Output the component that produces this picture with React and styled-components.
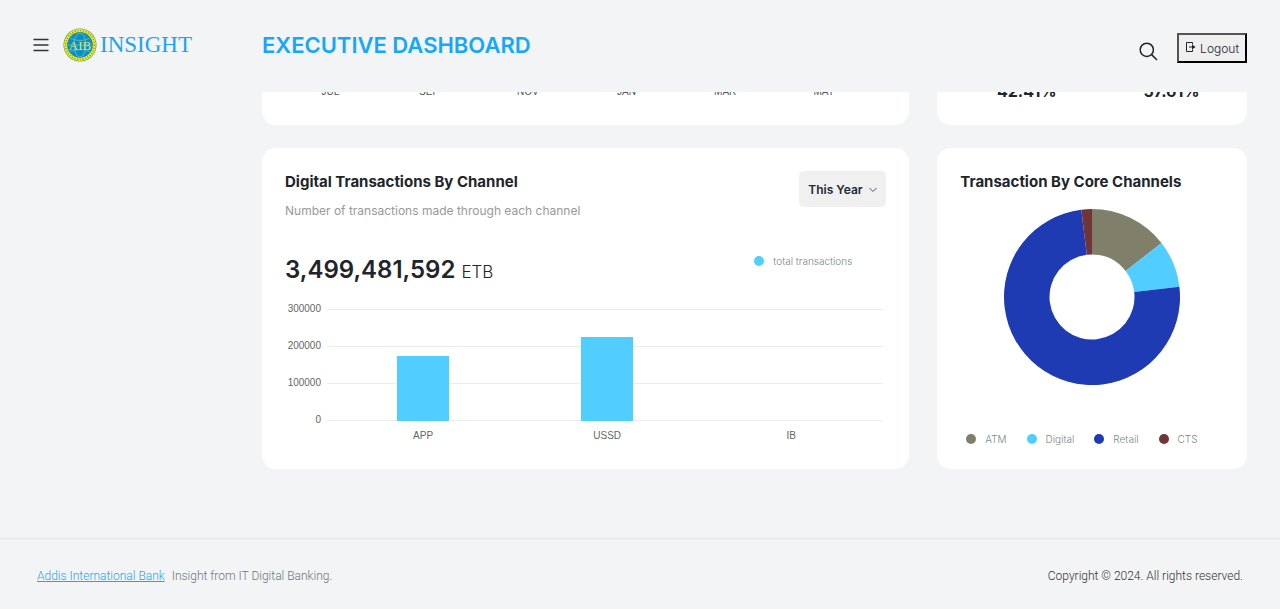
import React from "react";
import styled, { createGlobalStyle } from "styled-components";

const GlobalStyle = createGlobalStyle`
  *, *::before, *::after { box-sizing: border-box; }
  body {
    margin: 0;
    background: #f3f4f6;
    color: #212529;
    font-family: Inter, "Liberation Sans", sans-serif;
    font-size: 12px;
  }
  h1, h2, p { margin: 0; }
`;

const Page = styled.div`
  min-height: 100vh;
  display: flex;
  flex-direction: column;
`;

const Header = styled.header`
  height: 92px;
  flex: none;
  display: flex;
  align-items: center;
  padding: 0 33px 2px;
  background: #f3f4f6;
`;

const Brand = styled.div`
  width: 229px;
  flex: none;
  display: flex;
  align-items: center;
`;

const MenuButton = styled.button`
  display: flex;
  padding: 0;
  border: 0;
  background: none;
  margin-right: 14px;
`;

const BrandLink = styled.a`
  display: flex;
  align-items: center;
  gap: 3px;
  color: #1da1f2;
  text-decoration: none;
  font-family: "Liberation Serif", serif;
  font-size: 23px;
  line-height: 32px;
`;

const Title = styled.h1`
  flex: 1;
  color: #16a8f8;
  font-size: 22px;
  font-weight: 600;
  line-height: 32px;
`;

const Actions = styled.div`
  display: flex;
  align-items: center;
  gap: 19px;
  padding-top: 6px;
`;

const IconButton = styled.button`
  display: flex;
  padding: 6px 0 0;
  border: 0;
  background: none;
`;

const LogoutButton = styled.button`
  height: 30px;
  display: flex;
  align-items: center;
  gap: 4px;
  padding: 0 6px;
  border: 2px outset #000;
  background: #efefef;
  color: #212529;
  font: 300 12px Inter, sans-serif;
  svg { margin-bottom: 3px; }
`;

const Main = styled.main`
  flex: 1;
  padding: 0 33px 69px 262px;
  display: flex;
  flex-direction: column;
  gap: 23px;
`;

const Row = styled.div`
  display: grid;
  grid-template-columns: repeat(12, minmax(0, 1fr));
  column-gap: 28px;
`;

const Card = styled.section`
  grid-column: span ${(p) => p.$span};
  min-height: 321px;
  padding: 22px 23px;
  display: flex;
  flex-direction: column;
  background: #fff;
  border-radius: 14px;
`;

const ScrolledCard = styled.section`
  grid-column: span ${(p) => p.$span};
  height: 33px;
  display: flex;
  align-items: flex-end;
  overflow: hidden;
  padding: ${(p) => p.$pad};
  background: #fff;
  border-radius: 0 0 14px 14px;
`;

const Months = styled.div`
  flex: 1;
  display: flex;
  color: #555;
  font: 10px/12px "Liberation Sans", sans-serif;
`;

const Shares = styled.div`
  flex: 1;
  display: flex;
  font-size: 16px;
  font-weight: 700;
  line-height: 20px;
`;

const Cell = styled.span`
  flex: 1;
  text-align: center;
`;

const CardHead = styled.div`
  display: flex;
  justify-content: space-between;
  align-items: flex-start;
`;

const CardTitle = styled.h2`
  font-size: 15px;
  font-weight: 700;
  line-height: 24px;
`;

const Muted = styled.p`
  margin-top: 8px;
  color: #999;
  font-size: 12px;
  line-height: 18px;
`;

const SelectBox = styled.label`
  position: relative;
  display: flex;
  margin-top: 1px;
  svg { position: absolute; right: 9px; top: 15px; pointer-events: none; }
`;

const Select = styled.select`
  width: 87px;
  height: 36px;
  padding: 0 0 0 9px;
  appearance: none;
  border: 0;
  border-radius: 5px;
  background: #f0f0f0;
  color: #1f2937;
  font: 600 12px Inter, sans-serif;
`;

const Summary = styled.div`
  display: flex;
  align-items: flex-start;
  justify-content: space-between;
  margin-top: 34px;
  padding-right: 34px;
`;

const Amount = styled.p`
  display: flex;
  align-items: baseline;
  gap: 6px;
  font-size: 17px;
  font-weight: 300;
  line-height: 32px;
  strong { font-size: 24px; font-weight: 600; }
`;

const Legend = styled.ul`
  display: flex;
  gap: 20px;
  margin: 0;
  padding: ${(p) => p.$pad || 0};
  list-style: none;
  color: #7d8783;
  font-size: 10px;
  font-weight: 300;
  line-height: 14px;
`;

const LegendItem = styled.li`
  display: flex;
  align-items: center;
  gap: 9px;
  &::before {
    content: "";
    width: 10px;
    height: 10px;
    border-radius: 50%;
    background: ${(p) => p.$color};
  }
`;

const Chart = styled.div`
  display: grid;
  grid-template-columns: 36px 1fr;
  column-gap: 6px;
  margin: 15px 3px 0 0;
  color: #666;
  font: 10px/12px "Liberation Sans", sans-serif;
`;

const YAxis = styled.div`
  display: flex;
  flex-direction: column;
  justify-content: space-between;
  text-align: right;
`;

const PlotWrap = styled.div`
  padding: 6px 0 5px;
`;

const Plot = styled.div`
  display: flex;
  align-items: flex-end;
  height: 112px;
  padding-left: 4px;
  background: repeating-linear-gradient(#ececec 0 1px, transparent 1px 37px);
`;

const Slot = styled.div`
  flex: 1;
  height: 111px;
  display: flex;
  align-items: flex-end;
  justify-content: center;
`;

const Bar = styled.div`
  width: 28%;
  background: #52cdff;
`;

const XAxis = styled.div`
  grid-column: 2;
  display: flex;
  padding: 4px 0 0 4px;
`;

const DonutBox = styled.div`
  display: flex;
  justify-content: center;
  margin: 15px 0 47px;
`;

const Footer = styled.footer`
  height: 71px;
  display: flex;
  align-items: center;
  justify-content: space-between;
  padding: 3px 37px 0;
  border-top: 1px solid #e2e4e6;
  color: #6c757d;
  font-family: Roboto, sans-serif;
  font-weight: 300;
  line-height: 18px;
`;

const FooterLink = styled.a`
  margin-right: 7px;
  color: #1da5f5;
`;

const Copyright = styled.span`
  color: #333;
`;

const Emblem = () => (
  <svg width="34" height="34" viewBox="0 0 34 34" aria-hidden="true">
    <circle cx="17" cy="17" r="16.5" fill="#4f9a5a" />
    <circle cx="17" cy="17" r="14.4" fill="none" stroke="#f0ec30" strokeWidth="3" />
    <circle cx="17" cy="17" r="14.4" fill="none" stroke="#8b9a32" strokeWidth="1.4" strokeDasharray="1.2 1.5" />
    <circle cx="17" cy="17" r="12.4" fill="#0f8fc0" />
    <g fill="none" stroke="#6cc5dc" strokeWidth="0.7">
      <ellipse cx="17" cy="17" rx="6" ry="12" />
      <path d="M5 17h24M7.5 10.5q9.5 4 19 0M7.5 23.5q9.5-4 19 0" />
    </g>
    <text x="17" y="21.5" textAnchor="middle" fontFamily="Liberation Serif, serif" fontSize="13" fill="#d3e66a">AIB</text>
  </svg>
);

const channels = [
  { name: "APP", total: 177000 },
  { name: "USSD", total: 227000 },
  { name: "IB", total: 0 },
];

const core = [
  { name: "ATM", color: "#807f69", from: 0, to: 52.2 },
  { name: "Digital", color: "#52cdff", from: 52.2, to: 83.3 },
  { name: "Retail", color: "#1f3bb3", from: 83.3, to: 353 },
  { name: "CTS", color: "#703538", from: 353, to: 360 },
];

const point = (r, deg) => {
  const a = (deg * Math.PI) / 180;
  return `${88 + r * Math.sin(a)} ${88 - r * Math.cos(a)}`;
};

const slice = ({ from, to }) => {
  const large = to - from > 180 ? 1 : 0;
  return `M${point(88, from)}A88 88 0 ${large} 1 ${point(88, to)}L${point(42.5, to)}A42.5 42.5 0 ${large} 0 ${point(42.5, from)}Z`;
};

export default function App() {
  return (
    <Page>
      <GlobalStyle />
      <Header>
        <Brand>
          <MenuButton aria-label="Toggle menu">
            <svg width="16" height="14" viewBox="0 0 16 14" stroke="#333" strokeWidth="1.3">
              <path d="M.5 1.5h15M.5 7h15M.5 12.5h15" />
            </svg>
          </MenuButton>
          <BrandLink href="#">
            <Emblem />
            INSIGHT
          </BrandLink>
        </Brand>
        <Title>EXECUTIVE DASHBOARD</Title>
        <Actions>
          <IconButton aria-label="Search">
            <svg width="19" height="19" viewBox="0 0 19 19" fill="none" stroke="#212529" strokeWidth="1.5">
              <circle cx="7.8" cy="7.8" r="6.6" />
              <path d="M12.6 12.6l5.4 5.4" />
            </svg>
          </IconButton>
          <LogoutButton>
            <svg width="11" height="12" viewBox="0 0 11 12" fill="none" stroke="#212529">
              <path d="M7.5 3.5v-2h-6v9h6v-2M4 6h4" />
              <path d="M7 3.5L10.5 6 7 8.5z" fill="#212529" stroke="none" />
            </svg>
            Logout
          </LogoutButton>
        </Actions>
      </Header>
      <Main>
        <Row>
          <ScrolledCard $span={8} $pad="0 36px 27px 19px">
            <Months>
              {["JUL", "SEP", "NOV", "JAN", "MAR", "MAY"].map((m) => (
                <Cell key={m}>{m}</Cell>
              ))}
            </Months>
          </ScrolledCard>
          <ScrolledCard $span={4} $pad="0 3px 24px 17px">
            <Shares>
              <Cell>42.41%</Cell>
              <Cell>57.61%</Cell>
            </Shares>
          </ScrolledCard>
        </Row>
        <Row>
          <Card $span={8}>
            <CardHead>
              <div>
                <CardTitle>Digital Transactions By Channel</CardTitle>
                <Muted>Number of transactions made through each channel</Muted>
              </div>
              <SelectBox>
                <Select aria-label="Period">
                  <option>This Year</option>
                </Select>
                <svg width="8" height="8" viewBox="0 0 8 8" fill="none" stroke="#4b5563">
                  <path d="M.5 2L4 5.5 7.5 2" />
                </svg>
              </SelectBox>
            </CardHead>
            <Summary>
              <Amount>
                <strong>3,499,481,592</strong> ETB
              </Amount>
              <Legend>
                <LegendItem $color="#52cdff">total transactions</LegendItem>
              </Legend>
            </Summary>
            <Chart>
              <YAxis>
                {[300000, 200000, 100000, 0].map((v) => (
                  <span key={v}>{v}</span>
                ))}
              </YAxis>
              <PlotWrap>
                <Plot>
                  {channels.map((c) => (
                    <Slot key={c.name}>
                      <Bar style={{ height: `${c.total / 3000}%` }} />
                    </Slot>
                  ))}
                </Plot>
              </PlotWrap>
              <XAxis>
                {channels.map((c) => (
                  <Cell key={c.name}>{c.name}</Cell>
                ))}
              </XAxis>
            </Chart>
          </Card>
          <Card $span={4}>
            <CardTitle>Transaction By Core Channels</CardTitle>
            <DonutBox>
              <svg width="176" height="176" viewBox="0 0 176 176" role="img" aria-label="Transactions by core channel">
                {core.map((s) => (
                  <path key={s.name} d={slice(s)} fill={s.color} />
                ))}
              </svg>
            </DonutBox>
            <Legend $pad="0 0 0 6px">
              {core.map((s) => (
                <LegendItem key={s.name} $color={s.color}>{s.name}</LegendItem>
              ))}
            </Legend>
          </Card>
        </Row>
      </Main>
      <Footer>
        <span>
          <FooterLink href="#">Addis International Bank</FooterLink>
          Insight from IT Digital Banking.
        </span>
        <Copyright>Copyright © 2024. All rights reserved.</Copyright>
      </Footer>
    </Page>
  );
}
